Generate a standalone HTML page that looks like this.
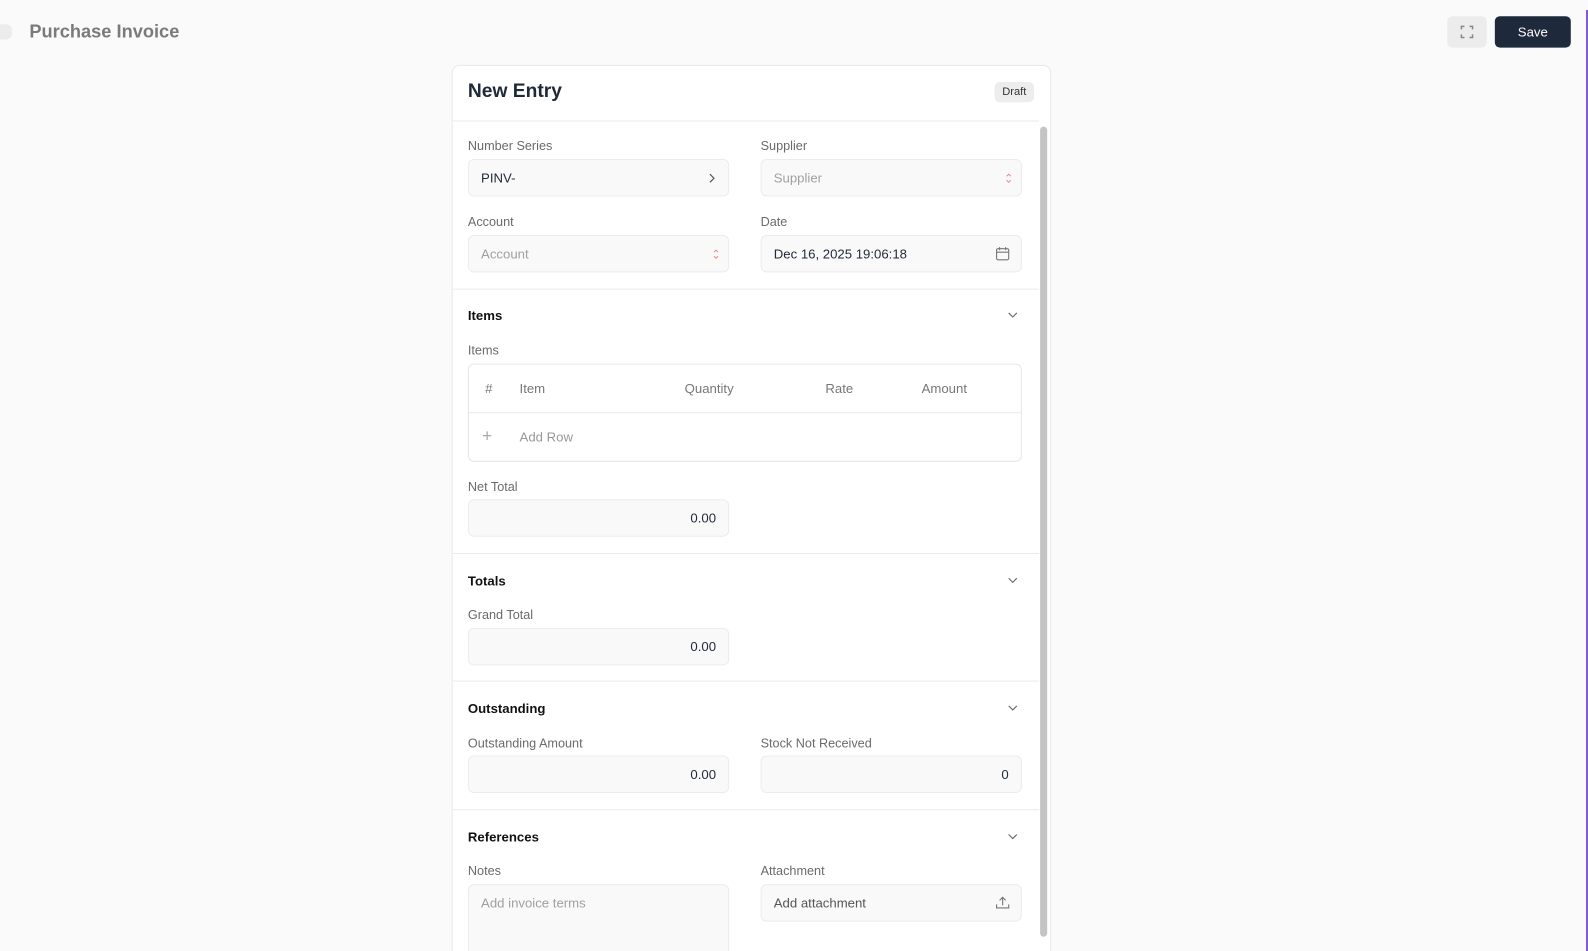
<!DOCTYPE html><html style="overflow:hidden;height:951px"><head><style>
*{box-sizing:border-box;margin:0;padding:0}
body{width:1588px;height:951px;overflow:hidden;background:#fafafa;font-family:"Liberation Sans",sans-serif;position:relative;color:#1f2937}
#w{position:absolute;left:0;top:0;width:1568px;height:939px;overflow:hidden;transform:scale(1.01276);transform-origin:0 0}
.a{position:absolute}
.title{left:29px;top:21px;font-size:18px;font-weight:bold;color:#7a7a7a}
.pill{left:-10px;top:24px;width:22px;height:15px;background:#ececec;border-radius:6px}
.fs{left:1429px;top:16px;width:39px;height:31px;background:#ececec;border-radius:5px}
.save{left:1476px;top:16px;width:75px;height:31px;background:#1e293b;border-radius:5px;color:#fff;font-size:13px;text-align:center;line-height:31px}
.card{left:446px;top:64px;width:592px;height:900px;background:#fff;border:1px solid #e8e8e8;border-radius:8px}
.hdr{left:462px;top:80px;font-size:19px;font-weight:bold;color:#1f2937}
.draft{left:982px;top:81px;width:39px;height:20px;background:#ededed;border-radius:5px;font-size:11px;text-align:center;line-height:20px;color:#333}
.hl{left:447px;width:579px;height:1px;background:#ebebeb}
.lbl{font-size:12.5px;color:#6b6b6b}
.in{height:37px;width:258px;background:#f9f9f9;border:1px solid #ececec;border-radius:6px;font-size:13px;line-height:35px;padding:0 12px}
.ph{color:#a0a0a0}
.r{text-align:right}
.sec{font-size:13px;font-weight:bold;color:#111;left:462px}
.chev{left:995px;width:10px;height:10px}
.sb{left:1027px;top:125px;width:7px;height:800px;background:#c4c4c4;border-radius:4px}
.tbl{left:462px;top:359px;width:547px;height:97px;border:1px solid #e6e6e6;border-radius:6px}
.th{font-size:13px;color:#777}
</style></head><body><div id="w">
<div class="a pill"></div>
<div class="a title">Purchase Invoice</div>
<div class="a fs"><svg width="39" height="31"><path d="M14 13v-3h3M22 10h3v3M25 18v3h-3M17 21h-3v-3" fill="none" stroke="#888" stroke-width="1.5"/></svg></div>
<div class="a save">Save</div>
<div class="a card"></div>
<div class="a hdr">New Entry</div>
<div class="a draft">Draft</div>
<div class="a hl" style="top:119px"></div>
<div class="a sb"></div>

<div class="a lbl" style="left:462px;top:137px">Number Series</div>
<div class="a in" style="left:462px;top:157px">PINV-<svg class="a" style="right:12px;top:13px" width="8" height="10"><path d="M2 1l4 4-4 4" fill="none" stroke="#555" stroke-width="1.2"/></svg></div>
<div class="a lbl" style="left:751px;top:137px">Supplier</div>
<div class="a in ph" style="left:751px;top:157px">Supplier<svg class="a" style="right:8px;top:11px" width="8" height="14"><path d="M2 5l2-2 2 2M2 9l2 2 2-2" fill="none" stroke="#e88" stroke-width="1"/></svg></div>
<div class="a lbl" style="left:462px;top:212px">Account</div>
<div class="a in ph" style="left:462px;top:232px">Account<svg class="a" style="right:8px;top:11px" width="8" height="14"><path d="M2 5l2-2 2 2M2 9l2 2 2-2" fill="none" stroke="#e88" stroke-width="1"/></svg></div>
<div class="a lbl" style="left:751px;top:212px">Date</div>
<div class="a in" style="left:751px;top:232px">Dec 16, 2025 19:06:18<svg class="a" style="right:11px;top:10px" width="14" height="15"><rect x="1" y="2.5" width="12" height="11" rx="1.5" fill="none" stroke="#777" stroke-width="1.1"/><path d="M1 6h12M4 1v3M10 1v3" stroke="#777" stroke-width="1.1"/></svg></div>
<div class="a hl" style="top:285px"></div>

<div class="a sec" style="top:304px">Items</div>
<svg class="a chev" style="top:306px"><path d="M1 3l4 4 4-4" fill="none" stroke="#666" stroke-width="1.1"/></svg>
<div class="a lbl" style="left:462px;top:339px">Items</div>
<div class="a tbl"></div>
<div class="a" style="left:463px;top:407px;width:545px;height:1px;background:#eaeaea"></div>
<div class="a th" style="left:479px;top:376px">#</div>
<div class="a th" style="left:513px;top:376px">Item</div>
<div class="a th" style="left:676px;top:376px">Quantity</div>
<div class="a th" style="left:815px;top:376px">Rate</div>
<div class="a th" style="left:910px;top:376px">Amount</div>
<div class="a th" style="left:476px;top:421px;color:#aaa;font-size:17px">+</div>
<div class="a th" style="left:513px;top:424px;color:#999">Add Row</div>
<div class="a lbl" style="left:462px;top:474px">Net Total</div>
<div class="a in r" style="left:462px;top:493px">0.00</div>
<div class="a hl" style="top:546px"></div>

<div class="a sec" style="top:566px">Totals</div>
<svg class="a chev" style="top:568px"><path d="M1 3l4 4 4-4" fill="none" stroke="#666" stroke-width="1.1"/></svg>
<div class="a lbl" style="left:462px;top:600px">Grand Total</div>
<div class="a in r" style="left:462px;top:620px">0.00</div>
<div class="a hl" style="top:672px"></div>

<div class="a sec" style="top:692px">Outstanding</div>
<svg class="a chev" style="top:694px"><path d="M1 3l4 4 4-4" fill="none" stroke="#666" stroke-width="1.1"/></svg>
<div class="a lbl" style="left:462px;top:727px">Outstanding Amount</div>
<div class="a in r" style="left:462px;top:746px">0.00</div>
<div class="a lbl" style="left:751px;top:727px">Stock Not Received</div>
<div class="a in r" style="left:751px;top:746px">0</div>
<div class="a hl" style="top:799px"></div>

<div class="a sec" style="top:819px">References</div>
<svg class="a chev" style="top:821px"><path d="M1 3l4 4 4-4" fill="none" stroke="#666" stroke-width="1.1"/></svg>
<div class="a lbl" style="left:462px;top:853px">Notes</div>
<div class="a in ph" style="left:462px;top:873px;height:90px;line-height:35px">Add invoice terms</div>
<div class="a lbl" style="left:751px;top:853px">Attachment</div>
<div class="a in" style="left:751px;top:873px;color:#555">Add attachment<svg class="a" style="right:11px;top:10px" width="14" height="14"><path d="M7 10V2M4 5l3-3 3 3M1 9v3.5h12V9" fill="none" stroke="#777" stroke-width="1.1"/></svg></div>
</div>
<div class="a" style="left:1586px;top:10px;width:2px;height:941px;background:#7c5cd6"></div>
</body></html>
